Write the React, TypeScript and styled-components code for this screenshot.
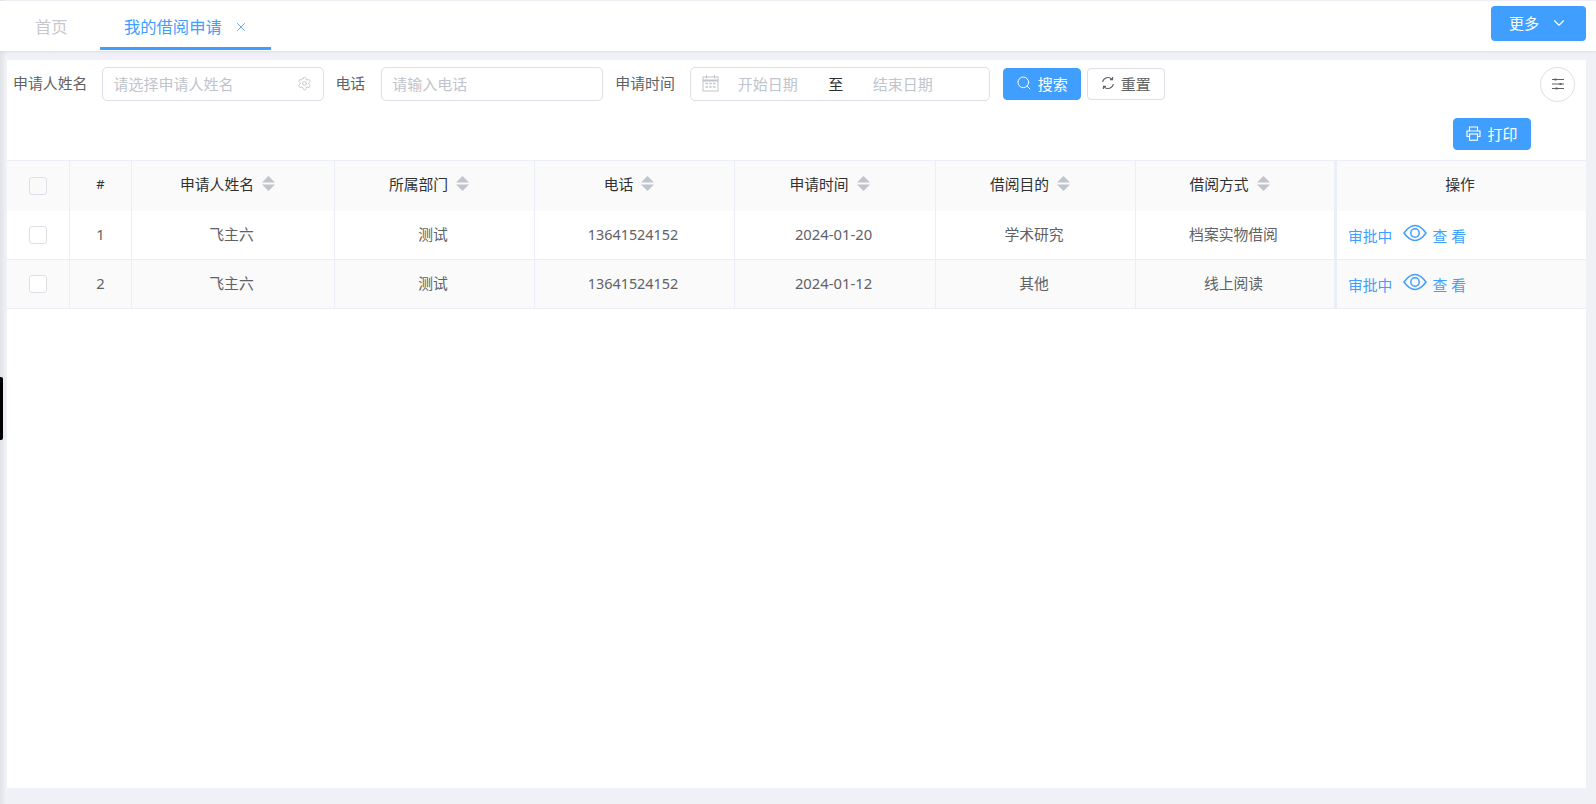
import React from "react";
import styled, { createGlobalStyle } from "styled-components";
import { ChevronDown, Search, Settings, X } from "lucide-react";

const FONT = `"Noto Sans", "Noto Sans CJK SC", sans-serif`;
const BLUE = "#409eff";
const COLUMNS = "63px 62px 203px 200px 200px 201px 200px 199px 1fr";

const GlobalStyle = createGlobalStyle`
  html, body {
    margin: 0;
    padding: 0;
    background: #eff1f6;
    font-family: ${FONT};
  }
  * {
    box-sizing: border-box;
  }
`;

const Page = styled.div`
  position: relative;
  width: 1596px;
  height: 804px;
  display: flex;
  flex-direction: column;
  overflow: hidden;
  background: linear-gradient(90deg, #dfe2e6 0, #eff1f6 6px);
`;

const TabBar = styled.div`
  flex: none;
  height: 50px;
  margin-top: 1px;
  background: #fff;
  display: flex;
  align-items: stretch;
  justify-content: space-between;
  padding-right: 10px;
  box-shadow: 0 1px 3px rgba(0, 0, 0, 0.08);
`;

const Tabs = styled.div`
  display: flex;
  align-items: stretch;
`;

const Tab = styled.div<{ $active?: boolean; $width: number; $inset: number }>`
  width: ${(p) => p.$width}px;
  height: 49px;
  display: flex;
  align-items: center;
  gap: 12px;
  padding: 3px 0 0 ${(p) => p.$inset}px;
  font-size: 16.3px;
  color: ${(p) => (p.$active ? BLUE : "#c6c8cc")};
  border-bottom: 3px solid ${(p) => (p.$active ? BLUE : "transparent")};
  svg {
    color: ${BLUE};
    margin-top: 3px;
  }
`;

const MoreButton = styled.button`
  width: 95px;
  height: 35px;
  margin-top: 5px;
  border: 0;
  border-radius: 4px;
  background: ${BLUE};
  color: #fff;
  font: 15px ${FONT};
  display: flex;
  align-items: center;
  justify-content: center;
  gap: 11px;
  padding: 0 0 2px;
`;

const Panel = styled.div`
  flex: none;
  width: 1579px;
  height: 728px;
  margin: 9px 0 0 7px;
  background: #fff;
  padding-top: 7px;
`;

const FormRow = styled.div`
  height: 34px;
  display: flex;
  align-items: center;
  padding-left: 6px;
`;

const Label = styled.span<{ $gap: number }>`
  font-size: 14.9px;
  color: #606266;
  margin-right: ${(p) => p.$gap}px;
  margin-bottom: 3px;
  white-space: nowrap;
`;

const InputBox = styled.div<{ $width: number; $gap: number }>`
  width: ${(p) => p.$width}px;
  height: 34px;
  margin-right: ${(p) => p.$gap}px;
  border: 1px solid #dcdfe6;
  border-radius: 5px;
  padding: 0 11px 2px 10px;
  display: flex;
  align-items: center;
  justify-content: space-between;
  font-size: 15px;
  color: #c0c4cc;
`;

const DateBox = styled(InputBox)`
  justify-content: flex-start;
  padding: 0 0 2px 11px;
`;

const DateText = styled.span<{ $width: number }>`
  width: ${(p) => p.$width}px;
  text-align: center;
`;

const DateSeparator = styled.span`
  width: 38px;
  text-align: center;
  color: #303133;
`;

const ActionButton = styled.button<{ $primary?: boolean }>`
  flex: none;
  width: 78px;
  height: 32px;
  border-radius: 4px;
  border: 1px solid ${(p) => (p.$primary ? BLUE : "#dcdfe6")};
  background: ${(p) => (p.$primary ? BLUE : "#fff")};
  color: ${(p) => (p.$primary ? "#fff" : "#606266")};
  font: 15px ${FONT};
  display: flex;
  align-items: center;
  justify-content: center;
  gap: 6px;
  padding: 0 0 2px;
`;

const ResetButton = styled(ActionButton)`
  margin-left: 6px;
`;

const ToolCircle = styled.button`
  width: 35px;
  height: 35px;
  margin-left: auto;
  margin-right: 11px;
  border: 1px solid #dcdfe6;
  border-radius: 50%;
  background: #fff;
  display: flex;
  align-items: center;
  justify-content: center;
  padding: 0;
`;

const PrintRow = styled.div`
  height: 59px;
  display: flex;
  justify-content: flex-end;
  padding: 17px 55px 0 0;
`;

const Table = styled.div`
  border-top: 1px solid #ebeef5;
`;

const Row = styled.div<{ $kind: "head" | "plain" | "stripe" }>`
  display: grid;
  grid-template-columns: ${COLUMNS};
  height: ${(p) => (p.$kind === "head" ? 50 : 49)}px;
  background: ${(p) => (p.$kind === "plain" ? "#fff" : "#fafafa")};
  border-bottom: ${(p) => (p.$kind === "head" ? "0" : "1px solid #ebeef5")};
`;

const Cell = styled.div<{ $head?: boolean; $fixed?: boolean; $sortable?: boolean }>`
  display: flex;
  align-items: center;
  justify-content: center;
  gap: 8px;
  padding: 0 ${(p) => (p.$sortable ? 11 : 3)}px ${(p) => (p.$head ? 5 : 3)}px 0;
  font-size: 14.8px;
  color: ${(p) => (p.$head ? "#303133" : "#606266")};
  border-right: 1px solid #ebeef5;
  border-left: ${(p) => (p.$fixed ? "2px solid #ebeef5" : "0")};
  &:last-child {
    border-right: 0;
  }
`;

const CheckCell = styled(Cell)`
  padding: 0;
`;

const HashCell = styled(Cell)`
  font-size: ${(p) => (p.$head ? 13 : 14.8)}px;
  padding-right: 0;
`;

const PhoneCell = styled(Cell)`
  font-size: 14.4px;
  padding-bottom: 2px;
`;

const ActionCell = styled(Cell)`
  justify-content: flex-start;
  padding: 0 0 0 11px;
  color: ${BLUE};
  gap: 11px;
`;

const ViewLink = styled.span`
  display: flex;
  align-items: center;
  gap: 5px;
  letter-spacing: 4px;
  svg {
    margin-top: -5px;
  }
`;

const StatusText = styled.span`
  padding-top: 1px;
`;

const ViewText = styled.span`
  padding-top: 1px;
`;

const CheckBox = styled.span`
  width: 18px;
  height: 18px;
  border: 1px solid #dcdfe6;
  border-radius: 3px;
  background: #fff;
`;

const HeadCheckBox = styled(CheckBox)`
  background: #fafafa;
`;

const Handle = styled.div`
  position: absolute;
  left: 0;
  top: 377px;
  width: 3px;
  height: 63px;
  background: #000;
  border-radius: 0 2px 2px 0;
`;

const SortCaret = () => (
  <svg width="13" height="17" viewBox="0 0 13 17">
    <path d="M6.5 1 L13 7.5 H0 Z" fill="#c0c4cc" />
    <path d="M0 9.5 H13 L6.5 16 Z" fill="#c0c4cc" />
  </svg>
);

const EyeIcon = () => (
  <svg width="24" height="18" viewBox="0 0 24 18" fill="none" stroke={BLUE} strokeWidth="1.5">
    <path d="M1 9 C5 3.5 8.5 1.5 12 1.5 C15.5 1.5 19 3.5 23 9 C19 14.5 15.5 16.5 12 16.5 C8.5 16.5 5 14.5 1 9 Z" />
    <circle cx="12" cy="9" r="4.2" />
  </svg>
);

const CalendarIcon = () => (
  <svg width="17" height="18" viewBox="0 0 17 18" fill="none" stroke="#c0c4cc" strokeWidth="1">
    <rect x="1" y="3" width="15" height="14" />
    <path d="M1 6.5 H16" strokeWidth="2" />
    <path d="M4.5 1 V4.5 M12.5 1 V4.5" />
    <path d="M3.5 9.5 H13.5 M3.5 13 H13.5" strokeWidth="1.6" strokeDasharray="2.4 1.4" />
  </svg>
);

const ResetIcon = () => (
  <svg width="14" height="14" viewBox="0 0 14 14" fill="none" stroke="#606266" strokeWidth="1.1">
    <path d="M1.6 6 A5.5 5.5 0 0 1 11 3.2" />
    <path d="M12.4 8 A5.5 5.5 0 0 1 3 10.8" />
    <path d="M11.6 1 V3.6 H9" />
    <path d="M2.4 13 V10.4 H5" />
  </svg>
);

const PrintIcon = () => (
  <svg width="15" height="15" viewBox="0 0 15 15" fill="none" stroke="#fff" strokeWidth="1.2">
    <path d="M3.5 10.5 H1 V5 H14 V10.5 H11.5" />
    <path d="M3.5 5 V1 H11.5 V5" />
    <rect x="3.5" y="8" width="8" height="6.2" />
  </svg>
);

const FilterIcon = () => (
  <svg width="14" height="14" viewBox="0 0 14 14" fill="none" stroke="#606266" strokeWidth="1">
    <path d="M1 2.5 H13 M1 7 H13 M1 11.5 H13" />
    <path d="M4.5 1.5 V3.5 M9.5 6 V8 M5.5 10.5 V12.5" strokeWidth="2" />
  </svg>
);

const headers = ["申请人姓名", "所属部门", "电话", "申请时间", "借阅目的", "借阅方式"];

const rows = [
  { id: 1, name: "飞主六", dept: "测试", phone: "13641524152", date: "2024-01-20", purpose: "学术研究", way: "档案实物借阅" },
  { id: 2, name: "飞主六", dept: "测试", phone: "13641524152", date: "2024-01-12", purpose: "其他", way: "线上阅读" },
];

export default function App() {
  return (
    <Page>
      <GlobalStyle />
      <TabBar>
        <Tabs>
          <Tab $width={100} $inset={35}>首页</Tab>
          <Tab $active $width={171} $inset={24}>
            我的借阅申请
            <X size={14} strokeWidth={1.5} />
          </Tab>
        </Tabs>
        <MoreButton>
          更多
          <ChevronDown size={18} strokeWidth={1.5} />
        </MoreButton>
      </TabBar>
      <Panel>
        <FormRow>
          <Label $gap={15}>申请人姓名</Label>
          <InputBox $width={222} $gap={11}>
            请选择申请人姓名
            <Settings size={15} strokeWidth={1.5} />
          </InputBox>
          <Label $gap={16}>电话</Label>
          <InputBox $width={222} $gap={12}>请输入电话</InputBox>
          <Label $gap={15}>申请时间</Label>
          <DateBox $width={300} $gap={13}>
            <CalendarIcon />
            <DateText $width={98}>开始日期</DateText>
            <DateSeparator>至</DateSeparator>
            <DateText $width={96}>结束日期</DateText>
          </DateBox>
          <ActionButton $primary>
            <Search size={16} strokeWidth={1.5} />
            搜索
          </ActionButton>
          <ResetButton>
            <ResetIcon />
            重置
          </ResetButton>
          <ToolCircle>
            <FilterIcon />
          </ToolCircle>
        </FormRow>
        <PrintRow>
          <ActionButton $primary>
            <PrintIcon />
            打印
          </ActionButton>
        </PrintRow>
        <Table>
          <Row $kind="head">
            <CheckCell $head><HeadCheckBox /></CheckCell>
            <HashCell $head>#</HashCell>
            {headers.map((h) => (
              <Cell $head $sortable key={h}>
                {h}
                <SortCaret />
              </Cell>
            ))}
            <Cell $head $fixed>操作</Cell>
          </Row>
          {rows.map((r) => (
            <Row key={r.id} $kind={r.id % 2 === 0 ? "stripe" : "plain"}>
              <CheckCell><CheckBox /></CheckCell>
              <HashCell>{r.id}</HashCell>
              <Cell>{r.name}</Cell>
              <Cell>{r.dept}</Cell>
              <PhoneCell>{r.phone}</PhoneCell>
              <Cell>{r.date}</Cell>
              <Cell>{r.purpose}</Cell>
              <Cell>{r.way}</Cell>
              <ActionCell $fixed>
                <StatusText>审批中</StatusText>
                <ViewLink>
                  <EyeIcon />
                  <ViewText>查看</ViewText>
                </ViewLink>
              </ActionCell>
            </Row>
          ))}
        </Table>
      </Panel>
      <Handle />
    </Page>
  );
}
